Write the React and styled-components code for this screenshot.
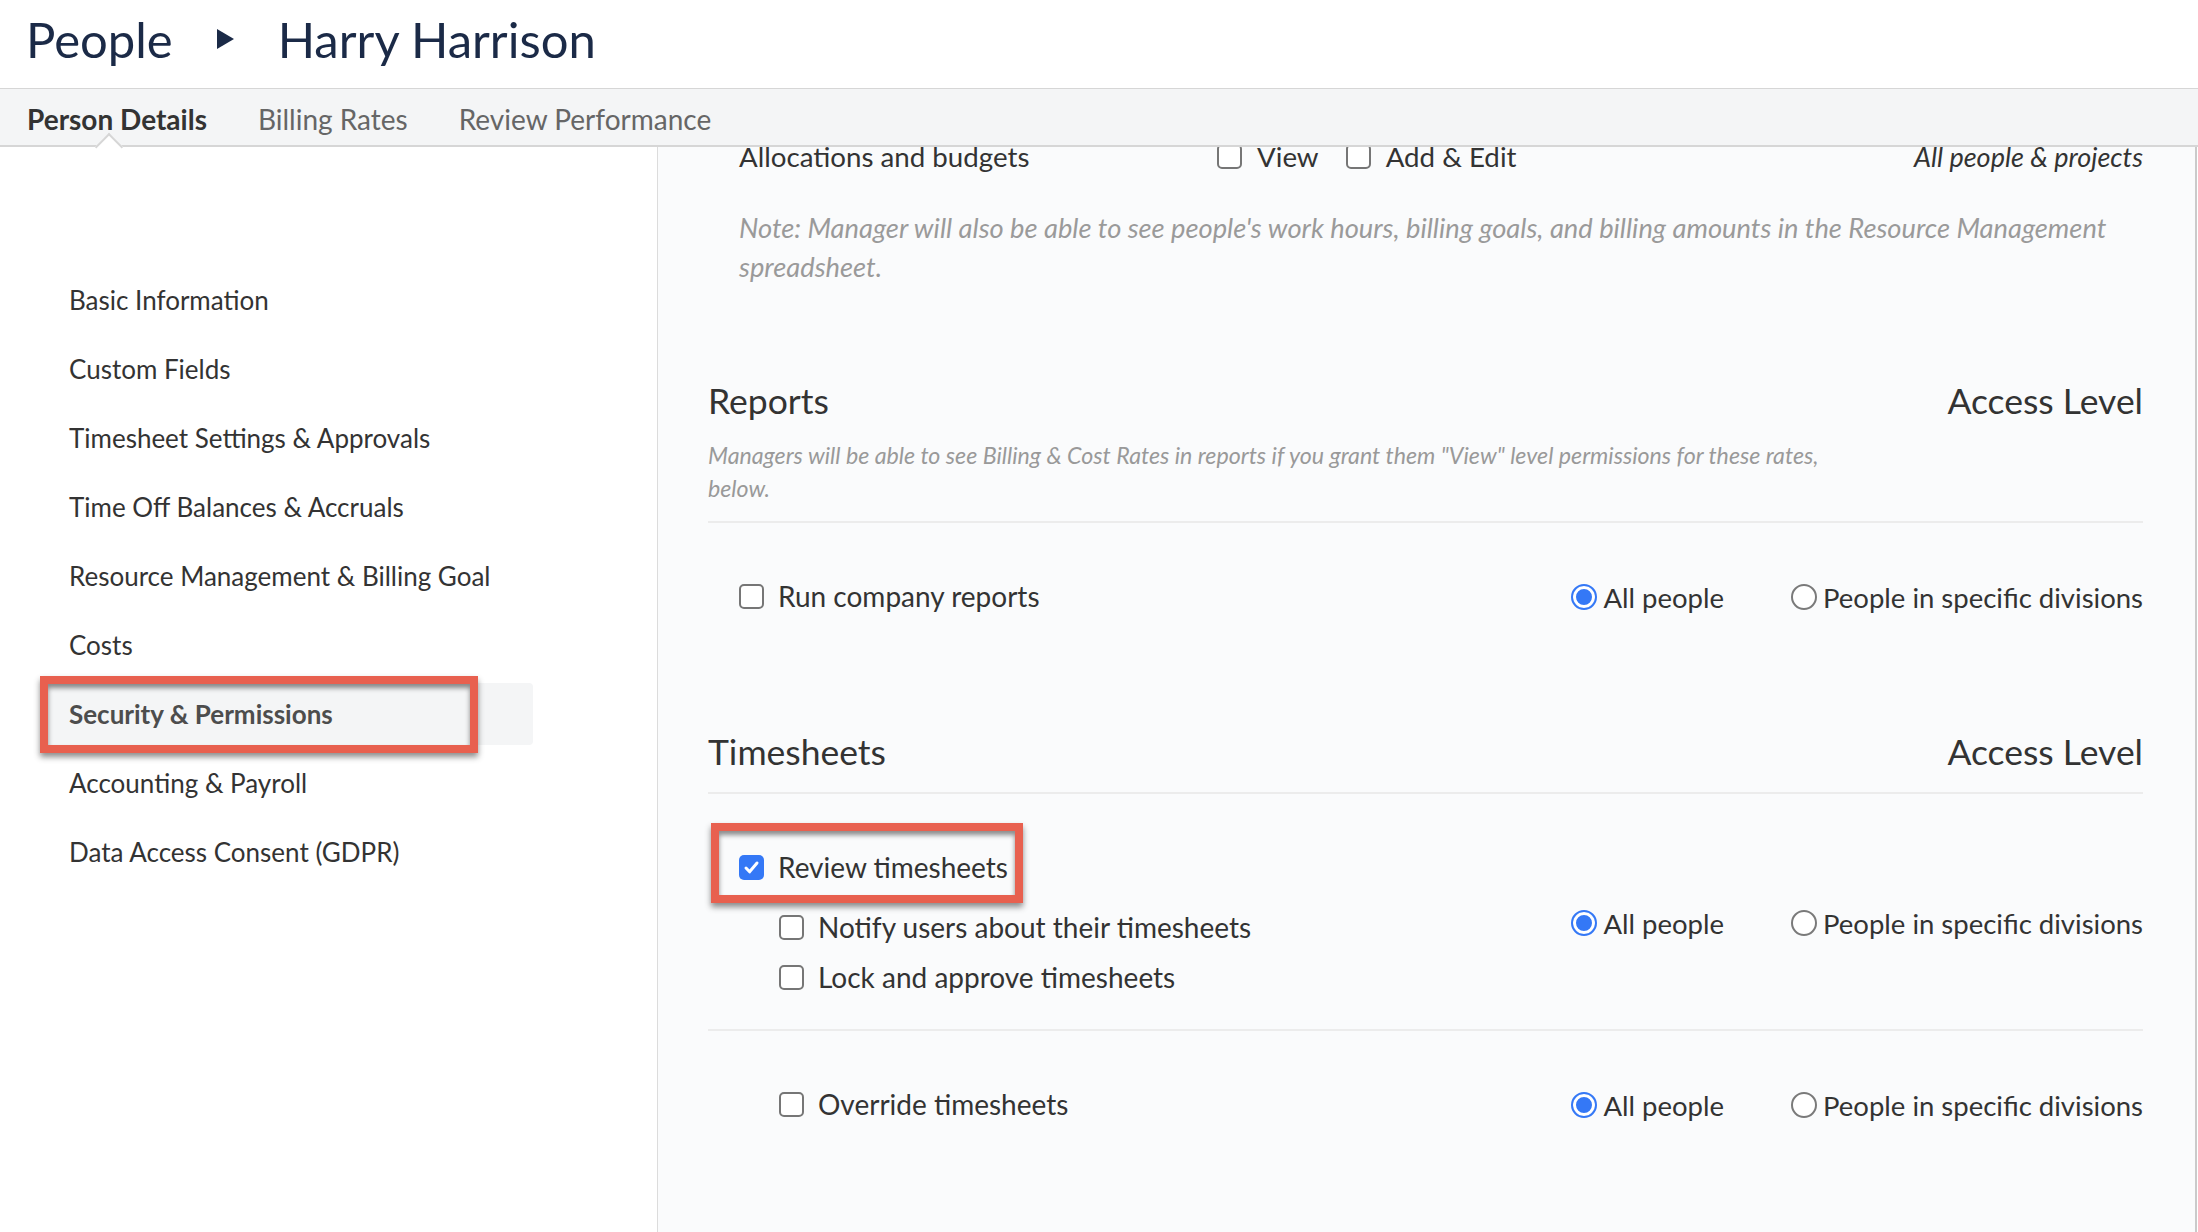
import React, { useLayoutEffect, useRef } from 'react';
import styled, { createGlobalStyle, css } from 'styled-components';

const GlobalStyle = createGlobalStyle`
  *, *::before, *::after { box-sizing: border-box; }
  html, body {
    margin: 0;
    height: 100%;
    overflow: hidden;
  }
  body {
    font-family: Lato, "Open Sans", Arial, sans-serif;
    color: #333;
    background: #fff;
  }
  #root { height: 100%; }
`;

const Page = styled.div`
  height: 100vh;
  display: flex;
  flex-direction: column;
`;

const Header = styled.header`
  height: 88px;
  flex-shrink: 0;
  display: flex;
  align-items: center;
  gap: 44px;
  padding: 0 0 10px 26px;
  font-size: 49px;
  color: #1b2a47;

  svg { flex-shrink: 0; }
`;

const TabBar = styled.nav`
  position: relative;
  z-index: 2;
  height: 59px;
  flex-shrink: 0;
  display: flex;
  align-items: stretch;
  gap: 51px;
  padding-left: 27px;
  background: #f4f5f6;
  border-top: 1px solid #d6d6d6;
  border-bottom: 2px solid #d6d6d6;
`;

const Tab = styled.a`
  position: relative;
  display: flex;
  align-items: center;
  padding-top: 4px;
  font-size: 28px;
  color: ${p => (p.$active ? '#333' : '#666')};
  font-weight: ${p => (p.$active ? 700 : 400)};
  cursor: pointer;

  ${p => p.$active && css`
    &::after {
      content: '';
      position: absolute;
      left: 72px;
      bottom: -12px;
      width: 20px;
      height: 20px;
      background: #fff;
      border-top: 2px solid #d6d6d6;
      border-left: 2px solid #d6d6d6;
      transform: rotate(45deg);
    }
  `}
`;

const Body = styled.div`
  flex: 1;
  min-height: 0;
  display: flex;
`;

const Sidebar = styled.aside`
  width: 658px;
  flex-shrink: 0;
  display: flex;
  flex-direction: column;
  gap: 7px;
  padding: 122px 0 0 42px;
  border-right: 1px solid #dcdcdc;
  background: #fff;
`;

const redFrame = css`
  content: '';
  position: absolute;
  border: 8px solid #e8604f;
  box-shadow: 0 4px 6px rgba(0, 0, 0, 0.45), inset 0 4px 5px rgba(0, 0, 0, 0.45);
  pointer-events: none;
`;

const SideItem = styled.a`
  position: relative;
  width: 491px;
  height: 62px;
  display: flex;
  align-items: center;
  padding-left: 27px;
  border-radius: 4px;
  font-size: 26px;
  color: #333;
  cursor: pointer;

  ${p => p.$active && css`
    background: #f4f5f6;
    font-weight: 700;
    color: #4d4d4d;
  `}

  ${p => p.$marked && css`
    &::after {
      ${redFrame};
      left: -2px;
      top: -7px;
      width: 438px;
      height: 77px;
    }
  `}
`;

const Main = styled.main`
  flex: 1;
  min-width: 0;
  overflow: hidden;
  padding: 0 52px 240px 50px;
  margin-right: 1px;
  background: #fafbfc;
  border-right: 2px solid #cacaca;
`;

const Section = styled.section`
  & + & { margin-top: 78px; }
`;

const SectionHead = styled.div`
  padding-bottom: 16px;
  border-bottom: 2px solid #ececec;
`;

const HeadRow = styled.div`
  height: 50px;
  display: flex;
  align-items: center;
  justify-content: space-between;
  font-size: 35.5px;
  color: #333;
`;

const Hint = styled.p`
  margin: 14px 0 0;
  max-width: 1140px;
  font-size: 23.2px;
  line-height: 33px;
  font-style: italic;
  color: #999;
`;

const AllocBlock = styled.div`
  padding: 48px 0 11px 31px;
`;

const AllocRow = styled.div`
  height: 50px;
  display: grid;
  grid-template-columns: 478px auto 1fr;
  align-items: center;
  font-size: 27.7px;
`;

const AllocOptions = styled.div`
  display: flex;
  align-items: center;
  gap: 27px;
`;

const Scope = styled.span`
  justify-self: end;
  font-size: 27px;
  font-style: italic;
`;

const Note = styled.p`
  margin: 27px 0 0;
  font-size: 27.3px;
  line-height: 39px;
  font-style: italic;
  color: #9a9a9a;
`;

const PermBlock = styled.div`
  display: flex;
  align-items: center;
  justify-content: space-between;
  padding: 48px 0 27px 31px;

  & + & { border-top: 2px solid #ececec; }
`;

const CheckList = styled.div`
  display: flex;
  flex-direction: column;
`;

const CheckRow = styled.label`
  position: relative;
  height: 50px;
  display: flex;
  align-items: center;
  gap: 14px;
  margin-left: ${p => (p.$indent ? '40px' : '0')};
  margin-bottom: ${p => (p.$marked ? '10px' : '0')};
  font-size: 28px;
  color: #333;
  align-self: flex-start;

  ${p => p.$marked && css`
    &::after {
      ${redFrame};
      left: -28px;
      top: -19px;
      width: 312px;
      height: 80px;
    }
  `}
`;

const Option = styled.label`
  display: flex;
  align-items: center;
  gap: 15px;
`;

const Box = styled.span`
  width: 25px;
  height: 25px;
  flex-shrink: 0;
  display: flex;
  align-items: center;
  justify-content: center;
  border-radius: 5px;
  border: ${p => (p.$checked ? 'none' : '2px solid #767676')};
  background: ${p => (p.$checked ? '#3478f6' : '#fff')};
`;

const RadioGroup = styled.div`
  display: flex;
  align-items: center;
  gap: 67px;
  padding-top: 2px;
  font-size: 27.5px;
  color: #333;
`;

const RadioOption = styled.label`
  display: flex;
  align-items: center;
  gap: 6px;
`;

const Dot = styled.span`
  width: 26px;
  height: 26px;
  flex-shrink: 0;
  border-radius: 50%;
  background: #fff;
  border: ${p => (p.$checked ? '2px solid #3478f6' : '2px solid #7a7a7a')};
  box-shadow: ${p => (p.$checked ? 'inset 0 0 0 3px #fff, inset 0 0 0 12px #3478f6' : 'none')};
`;

function Checkbox({ checked }) {
  return (
    <Box $checked={checked}>
      {checked && (
        <svg width="17" height="17" viewBox="0 0 17 17">
          <path d="M3 9l3.6 3.8L14 4" fill="none" stroke="#fff" strokeWidth="3" strokeLinecap="round" strokeLinejoin="round" />
        </svg>
      )}
    </Box>
  );
}

function Scopes() {
  return (
    <RadioGroup>
      <RadioOption><Dot $checked />All people</RadioOption>
      <RadioOption><Dot />People in specific divisions</RadioOption>
    </RadioGroup>
  );
}

const menu = [
  'Basic Information',
  'Custom Fields',
  'Timesheet Settings & Approvals',
  'Time Off Balances & Accruals',
  'Resource Management & Billing Goal',
  'Costs',
  'Security & Permissions',
  'Accounting & Payroll',
  'Data Access Consent (GDPR)',
];

export default function App() {
  const mainRef = useRef(null);
  const allocRef = useRef(null);

  // keep the permissions panel scrolled down to the allocations row
  useLayoutEffect(() => {
    const scrollToAlloc = () => {
      const main = mainRef.current;
      const row = allocRef.current;
      if (!main || !row) return;
      const m = main.getBoundingClientRect();
      const r = row.getBoundingClientRect();
      main.scrollTop = r.top - m.top + main.scrollTop + r.height / 2 - 9;
    };
    scrollToAlloc();
    if (document.fonts) document.fonts.ready.then(scrollToAlloc);
  }, []);

  return (
    <Page>
      <GlobalStyle />
      <Header>
        <span>People</span>
        <svg width="17" height="20" viewBox="0 0 17 20">
          <polygon points="0,0 17,10 0,20" fill="#1b2a47" />
        </svg>
        <span>Harry Harrison</span>
      </Header>
      <TabBar>
        <Tab $active>Person Details</Tab>
        <Tab>Billing Rates</Tab>
        <Tab>Review Performance</Tab>
      </TabBar>
      <Body>
        <Sidebar>
          {menu.map(item => {
            const current = item === 'Security & Permissions';
            return (
              <SideItem key={item} $active={current} $marked={current}>
                {item}
              </SideItem>
            );
          })}
        </Sidebar>
        <Main ref={mainRef}>
          <Section>
            <SectionHead>
              <HeadRow>
                <span>Resource Management</span>
                <span>Access Level</span>
              </HeadRow>
            </SectionHead>
            <AllocBlock>
              <AllocRow ref={allocRef}>
                <span>Allocations and budgets</span>
                <AllocOptions>
                  <Option><Checkbox />View</Option>
                  <Option><Checkbox />Add &amp; Edit</Option>
                </AllocOptions>
                <Scope>All people &amp; projects</Scope>
              </AllocRow>
              <Note>
                Note: Manager will also be able to see people's work hours, billing goals, and billing amounts in the Resource Management spreadsheet.
              </Note>
            </AllocBlock>
          </Section>

          <Section>
            <SectionHead>
              <HeadRow>
                <span>Reports</span>
                <span>Access Level</span>
              </HeadRow>
              <Hint>
                Managers will be able to see Billing &amp; Cost Rates in reports if you grant them "View" level permissions for these rates, below.
              </Hint>
            </SectionHead>
            <PermBlock>
              <CheckList>
                <CheckRow><Checkbox />Run company reports</CheckRow>
              </CheckList>
              <Scopes />
            </PermBlock>
          </Section>

          <Section>
            <SectionHead>
              <HeadRow>
                <span>Timesheets</span>
                <span>Access Level</span>
              </HeadRow>
            </SectionHead>
            <PermBlock>
              <CheckList>
                <CheckRow $marked><Checkbox checked />Review timesheets</CheckRow>
                <CheckRow $indent><Checkbox />Notify users about their timesheets</CheckRow>
                <CheckRow $indent><Checkbox />Lock and approve timesheets</CheckRow>
              </CheckList>
              <Scopes />
            </PermBlock>
            <PermBlock>
              <CheckList>
                <CheckRow $indent><Checkbox />Override timesheets</CheckRow>
              </CheckList>
              <Scopes />
            </PermBlock>
          </Section>
        </Main>
      </Body>
    </Page>
  );
}
